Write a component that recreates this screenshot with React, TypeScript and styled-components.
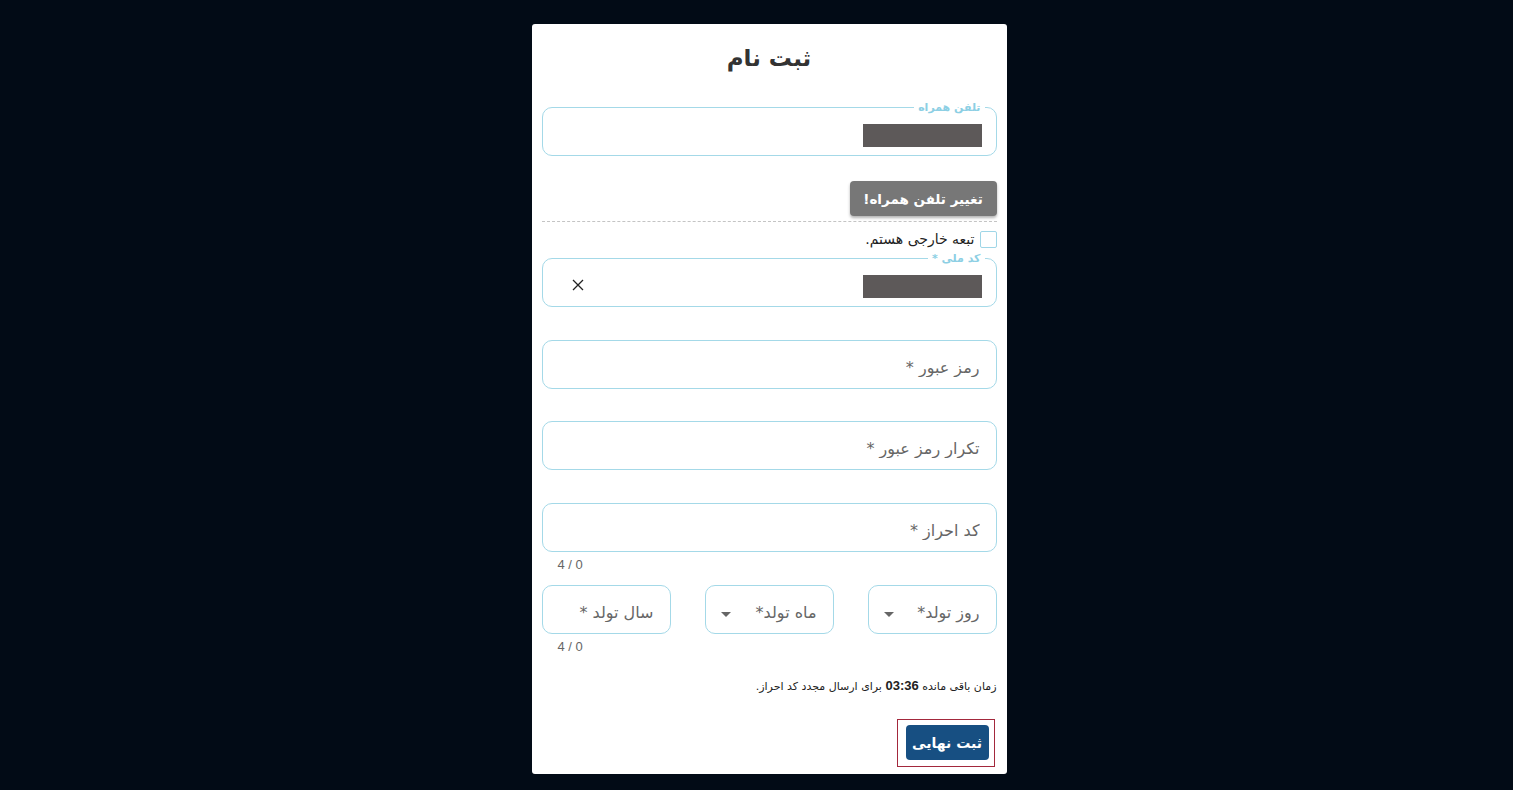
import React from 'react';
import styled, { createGlobalStyle } from 'styled-components';

const GlobalStyle = createGlobalStyle`
  html, body {
    margin: 0;
    padding: 0;
    background: #020b16;
  }
  body {
    font-family: "Liberation Sans", "DejaVu Sans", sans-serif;
  }
  * {
    box-sizing: border-box;
  }
`;

const Page = styled.div`
  min-height: 790px;
  display: flex;
  justify-content: center;
  align-items: flex-start;
  padding: 24px 0 0 25px;
`;

const Card = styled.form`
  width: 475px;
  background: #fff;
  border-radius: 3px;
  padding: 16px 10px 7px;
  direction: rtl;
  display: flex;
  flex-direction: column;
`;

const Title = styled.h1`
  margin: 0;
  text-align: center;
  font-family: "DejaVu Sans", sans-serif;
  font-size: 23px;
  line-height: 36px;
  font-weight: bold;
  color: #333;
`;

const Box = styled.div<{ $top: number }>`
  position: relative;
  margin-top: ${(p) => p.$top}px;
  height: 49px;
  border: 1px solid #a4d9e8;
  border-radius: 10px;
  display: flex;
  align-items: center;
  justify-content: space-between;
  padding: 8px 14px 0 29px;
`;

const FloatLabel = styled.span`
  position: absolute;
  top: -7px;
  right: 11px;
  padding: 0 4px;
  background: #fff;
  font-family: "DejaVu Sans", sans-serif;
  font-size: 11px;
  line-height: 14px;
  font-weight: bold;
  color: #8ccfe4;
`;

const Redacted = styled.span`
  width: 119px;
  height: 23px;
  background: #5d5959;
`;

const ClearIcon = styled.svg`
  width: 12px;
  height: 12px;
  margin-top: -4px;
`;

const TextInput = styled.input`
  display: block;
  width: 100%;
  height: 49px;
  border: 1px solid #a4d9e8;
  border-radius: 10px;
  background: #fff;
  outline: none;
  direction: rtl;
  padding: 5px 16px 0;
  font-family: "DejaVu Sans", sans-serif;
  font-size: 16px;
  color: #333;

  &::placeholder {
    color: #666;
  }
`;

const Spaced = styled.div<{ $top: number }>`
  margin-top: ${(p) => p.$top}px;
`;

const Counter = styled.div`
  margin-top: 6px;
  padding-left: 16px;
  text-align: left;
  font-size: 13px;
  line-height: 14px;
  color: #666;
`;

const GreyButton = styled.button`
  align-self: flex-start;
  margin-top: 25px;
  height: 35px;
  width: 147px;
  border: none;
  border-radius: 4px;
  background: #777;
  color: #fff;
  font-family: "DejaVu Sans", sans-serif;
  font-size: 13.5px;
  font-weight: bold;
  box-shadow: 0 2px 3px rgba(0, 0, 0, 0.3);
  cursor: pointer;
`;

const Divider = styled.hr`
  margin: 5px 0 0;
  border: none;
  border-top: 1px dashed #c4c4c4;
`;

const CheckRow = styled.label`
  margin-top: 9px;
  display: flex;
  align-items: center;
  gap: 5px;
  font-family: "DejaVu Sans", sans-serif;
  font-size: 14px;
  line-height: 17px;
  color: #222;
`;

const CheckBox = styled.span`
  width: 17px;
  height: 17px;
  border: 1.5px solid #9fd6e7;
  border-radius: 2px;
`;

const SelectRow = styled.div`
  margin-top: 13px;
  display: grid;
  grid-template-columns: repeat(3, 129px);
  justify-content: space-between;
`;

const SelectBox = styled.div`
  height: 49px;
  border: 1px solid #a4d9e8;
  border-radius: 10px;
  display: flex;
  align-items: center;
  justify-content: space-between;
  padding: 5px 16px 0 15px;
  font-family: "DejaVu Sans", sans-serif;
  font-size: 16px;
  color: #666;
`;

const Caret = styled.span`
  width: 0;
  height: 0;
  border-left: 5px solid transparent;
  border-right: 5px solid transparent;
  border-top: 5px solid #666;
  margin-top: 4px;
`;

const Timer = styled.p`
  margin: 23px 0 0;
  font-family: "DejaVu Sans", sans-serif;
  font-size: 11px;
  line-height: 18px;
  color: #222;

  b {
    font-family: "Liberation Sans", sans-serif;
    font-size: 13px;
  }
`;

const FocusRing = styled.div`
  align-self: flex-start;
  margin: 23px 2px 0 0;
  padding: 5px 5px 6px 8px;
  border: 1px solid #a3283c;
`;

const SubmitButton = styled.button`
  display: block;
  height: 35px;
  width: 83px;
  border: none;
  border-radius: 4px;
  background: #174f82;
  color: #fff;
  font-family: "DejaVu Sans", sans-serif;
  font-size: 14px;
  font-weight: bold;
  cursor: pointer;
`;

const selects = ['روز تولد*', 'ماه تولد*'];

export default function App() {
  return (
    <>
      <GlobalStyle />
      <Page>
        <Card onSubmit={(e) => e.preventDefault()}>
          <Title>ثبت نام</Title>

          <Box $top={31}>
            <FloatLabel>تلفن همراه</FloatLabel>
            <Redacted />
          </Box>

          <GreyButton type="button">تغییر تلفن همراه!</GreyButton>
          <Divider />

          <CheckRow>
            <CheckBox />
            تبعه خارجی هستم.
          </CheckRow>

          <Box $top={10}>
            <FloatLabel>کد ملی *</FloatLabel>
            <Redacted />
            <ClearIcon viewBox="0 0 12 12">
              <path d="M1 1L11 11M11 1L1 11" stroke="#222" strokeWidth="1.3" />
            </ClearIcon>
          </Box>

          <Spaced $top={33}>
            <TextInput type="password" placeholder="رمز عبور *" />
          </Spaced>
          <Spaced $top={32}>
            <TextInput type="password" placeholder="تکرار رمز عبور *" />
          </Spaced>
          <Spaced $top={33}>
            <TextInput placeholder="کد احراز *" />
          </Spaced>
          <Counter>0 / 4</Counter>

          <SelectRow>
            {selects.map((s) => (
              <SelectBox key={s}>
                {s}
                <Caret />
              </SelectBox>
            ))}
            <TextInput placeholder="سال تولد *" />
          </SelectRow>
          <Counter>0 / 4</Counter>

          <Timer>
            زمان باقی مانده <b>03:36</b> برای ارسال مجدد کد احراز.
          </Timer>

          <FocusRing>
            <SubmitButton type="submit">ثبت نهایی</SubmitButton>
          </FocusRing>
        </Card>
      </Page>
    </>
  );
}
